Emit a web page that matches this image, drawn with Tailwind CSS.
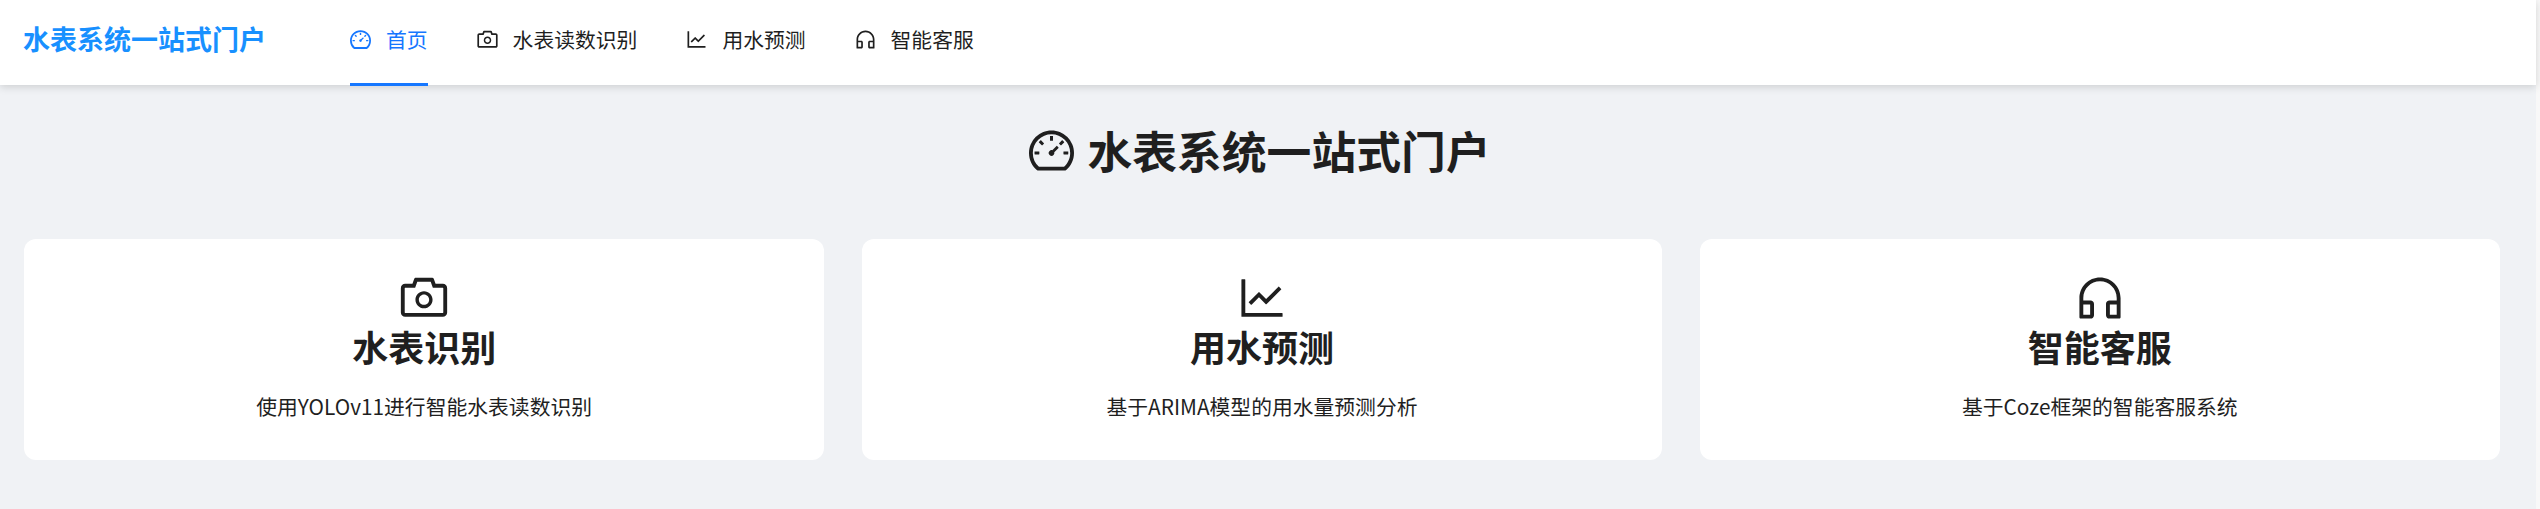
<!DOCTYPE html>
<html lang="zh-CN">
<head>
    <meta charset="UTF-8">
    <title>水表系统一站式门户</title>
    <script src="https://cdn.jsdelivr.net/npm/@tailwindcss/browser@4"></script>
</head>
<body class="h-[509px] w-[2540px] overflow-hidden bg-[#f8f8f8] font-['Noto_Sans_CJK_SC','Noto_Sans',sans-serif] text-[#1f1f1f]">
    <svg class="hidden">
        <symbol id="i-dashboard" viewBox="64 64 896 896"><path fill="currentColor" d="M924.8 385.6a446.7 446.7 0 00-96-142.4 446.7 446.7 0 00-142.4-96C631.1 123.8 572.5 112 512 112s-119.1 11.8-174.4 35.2a446.7 446.7 0 00-142.4 96 446.7 446.7 0 00-96 142.4C75.8 440.9 64 499.5 64 560c0 132.7 58.3 257.7 159.9 343.1l1.7 1.4c5.8 4.8 13.1 7.5 20.6 7.5h531.7c7.5 0 14.8-2.7 20.6-7.5l1.7-1.4C901.7 817.7 960 692.7 960 560c0-60.5-11.9-119.1-35.2-174.4zM761.4 836H262.6A371.12 371.12 0 01140 560c0-99.4 38.7-192.8 109-263 70.3-70.3 163.7-109 263-109 99.4 0 192.8 38.7 263 109 70.3 70.3 109 163.7 109 263 0 105.6-44.5 205.5-122.6 276zM623.5 421.5a8.03 8.03 0 00-11.3 0L527.7 506c-18.7-5-39.4-.2-54.1 14.5a55.95 55.95 0 000 79.2 55.95 55.95 0 0079.2 0 55.87 55.87 0 0014.5-54.1l84.5-84.5c3.1-3.1 3.1-8.2 0-11.3l-28.3-28.3zM490 320h44c4.4 0 8-3.6 8-8v-80c0-4.4-3.6-8-8-8h-44c-4.4 0-8 3.6-8 8v80c0 4.4 3.6 8 8 8zm260 218v44c0 4.4 3.6 8 8 8h80c4.4 0 8-3.6 8-8v-44c0-4.4-3.6-8-8-8h-80c-4.4 0-8 3.6-8 8zm12.7-197.2l-31.1-31.1a8.03 8.03 0 00-11.3 0l-56.6 56.6a8.03 8.03 0 000 11.3l31.1 31.1c3.1 3.1 8.2 3.1 11.3 0l56.6-56.6c3.1-3.1 3.1-8.2 0-11.3zm-458.6-31.1a8.03 8.03 0 00-11.3 0l-31.1 31.1a8.03 8.03 0 000 11.3l56.6 56.6c3.1 3.1 8.2 3.1 11.3 0l31.1-31.1c3.1-3.1 3.1-8.2 0-11.3l-56.6-56.6zM262 530h-80c-4.4 0-8 3.6-8 8v44c0 4.4 3.6 8 8 8h80c4.4 0 8-3.6 8-8v-44c0-4.4-3.6-8-8-8z"/></symbol>
        <symbol id="i-camera" viewBox="64 64 896 896"><path fill="currentColor" d="M864 248H728l-32.4-90.8a32.07 32.07 0 00-30.2-21.2H358.6c-13.5 0-25.6 8.5-30.1 21.2L296 248H160c-44.2 0-80 35.8-80 80v456c0 44.2 35.8 80 80 80h704c44.2 0 80-35.8 80-80V328c0-44.2-35.8-80-80-80zm8 536c0 4.4-3.6 8-8 8H160c-4.4 0-8-3.6-8-8V328c0-4.4 3.6-8 8-8h186.7l17.1-47.8 22.9-64.2h250.5l22.9 64.2 17.1 47.8H864c4.4 0 8 3.6 8 8v456zM512 384c-88.4 0-160 71.6-160 160s71.6 160 160 160 160-71.6 160-160-71.6-160-160-160zm0 256c-53 0-96-43-96-96s43-96 96-96 96 43 96 96-43 96-96 96z"/></symbol>
        <symbol id="i-chart" viewBox="64 64 896 896"><path fill="currentColor" d="M888 792H200V168c0-4.4-3.6-8-8-8h-56c-4.4 0-8 3.6-8 8v688c0 4.4 3.6 8 8 8h752c4.4 0 8-3.6 8-8v-56c0-4.4-3.6-8-8-8zM305.8 637.7c3.1 3.1 8.1 3.1 11.3 0l138.3-137.6L583 628.5c3.1 3.1 8.2 3.1 11.3 0l275.4-275.3c3.1-3.1 3.1-8.2 0-11.3l-39.6-39.6a8.03 8.03 0 00-11.3 0l-230 229.9L461.4 404a8.03 8.03 0 00-11.3 0L266.3 586.7a8.03 8.03 0 000 11.3l39.5 39.7z"/></symbol>
        <symbol id="i-service" viewBox="64 64 896 896"><path fill="currentColor" d="M512 128c-212.1 0-384 171.9-384 384v360c0 13.3 10.7 24 24 24h184c35.3 0 64-28.7 64-64V624c0-35.3-28.7-64-64-64H200v-48c0-172.3 139.7-312 312-312s312 139.7 312 312v48H688c-35.3 0-64 28.7-64 64v208c0 35.3 28.7 64 64 64h184c13.3 0 24-10.7 24-24V512c0-212.1-171.9-384-384-384zM328 632v192H200V632h128zm496 192H696V632h128v192z"/></symbol>
    </svg>

    <div class="flex h-full">
        <div class="flex h-full w-[2536px] flex-col bg-[#f0f2f5]">
            <header class="relative flex h-[85px] shrink-0 items-center bg-white pl-[23px] shadow-[0_2px_8px_rgba(0,0,0,0.15)]">
                <div class="w-[327px] pb-[7px] text-[27px] font-bold text-[#1890ff]">水表系统一站式门户</div>
                <nav class="flex h-full items-center gap-[49px] text-[20.8px]">
                    <a class="relative flex h-full items-center gap-[15px] pb-[6px] text-[#1677ff] after:absolute after:bottom-[-1px] after:left-0 after:h-[3px] after:w-full after:bg-[#1677ff]">
                        <svg class="size-[21px]"><use href="#i-dashboard"/></svg>首页
                    </a>
                    <a class="flex h-full items-center gap-[15px] pb-[6px]">
                        <svg class="size-[21px]"><use href="#i-camera"/></svg>水表读数识别
                    </a>
                    <a class="flex h-full items-center gap-[15px] pb-[6px]">
                        <svg class="size-[21px]"><use href="#i-chart"/></svg>用水预测
                    </a>
                    <a class="flex h-full items-center gap-[15px] pb-[6px]">
                        <svg class="size-[21px]"><use href="#i-service"/></svg>智能客服
                    </a>
                </nav>
            </header>

            <main class="flex-1 px-[24px]">
                <h1 class="flex h-[154px] items-center justify-center gap-[13px] pr-[16px] pb-[24px] text-[44.8px] font-bold">
                    <svg class="size-[45px]"><use href="#i-dashboard"/></svg>水表系统一站式门户
                </h1>
                <div class="grid w-[2476px] grid-cols-3 gap-[37.5px]">
                    <div class="flex h-[221px] flex-col items-center rounded-[12px] bg-white pt-[35px]">
                        <svg class="size-[48px]"><use href="#i-camera"/></svg>
                        <h2 class="mt-[-1px] text-[36px] leading-[50px] font-bold">水表识别</h2>
                        <p class="mt-[21px] text-[20.8px] leading-[28px]">使用YOLOv11进行智能水表读数识别</p>
                    </div>
                    <div class="flex h-[221px] flex-col items-center rounded-[12px] bg-white pt-[35px]">
                        <svg class="size-[48px]"><use href="#i-chart"/></svg>
                        <h2 class="mt-[-1px] text-[36px] leading-[50px] font-bold">用水预测</h2>
                        <p class="mt-[21px] text-[20.8px] leading-[28px]">基于ARIMA模型的用水量预测分析</p>
                    </div>
                    <div class="flex h-[221px] flex-col items-center rounded-[12px] bg-white pt-[35px]">
                        <svg class="size-[48px]"><use href="#i-service"/></svg>
                        <h2 class="mt-[-1px] text-[36px] leading-[50px] font-bold">智能客服</h2>
                        <p class="mt-[21px] text-[20.8px] leading-[28px]">基于Coze框架的智能客服系统</p>
                    </div>
                </div>
            </main>
        </div>
        <div class="h-full w-[4px] bg-[#f8f8f8]"></div>
    </div>
</body>
</html>
